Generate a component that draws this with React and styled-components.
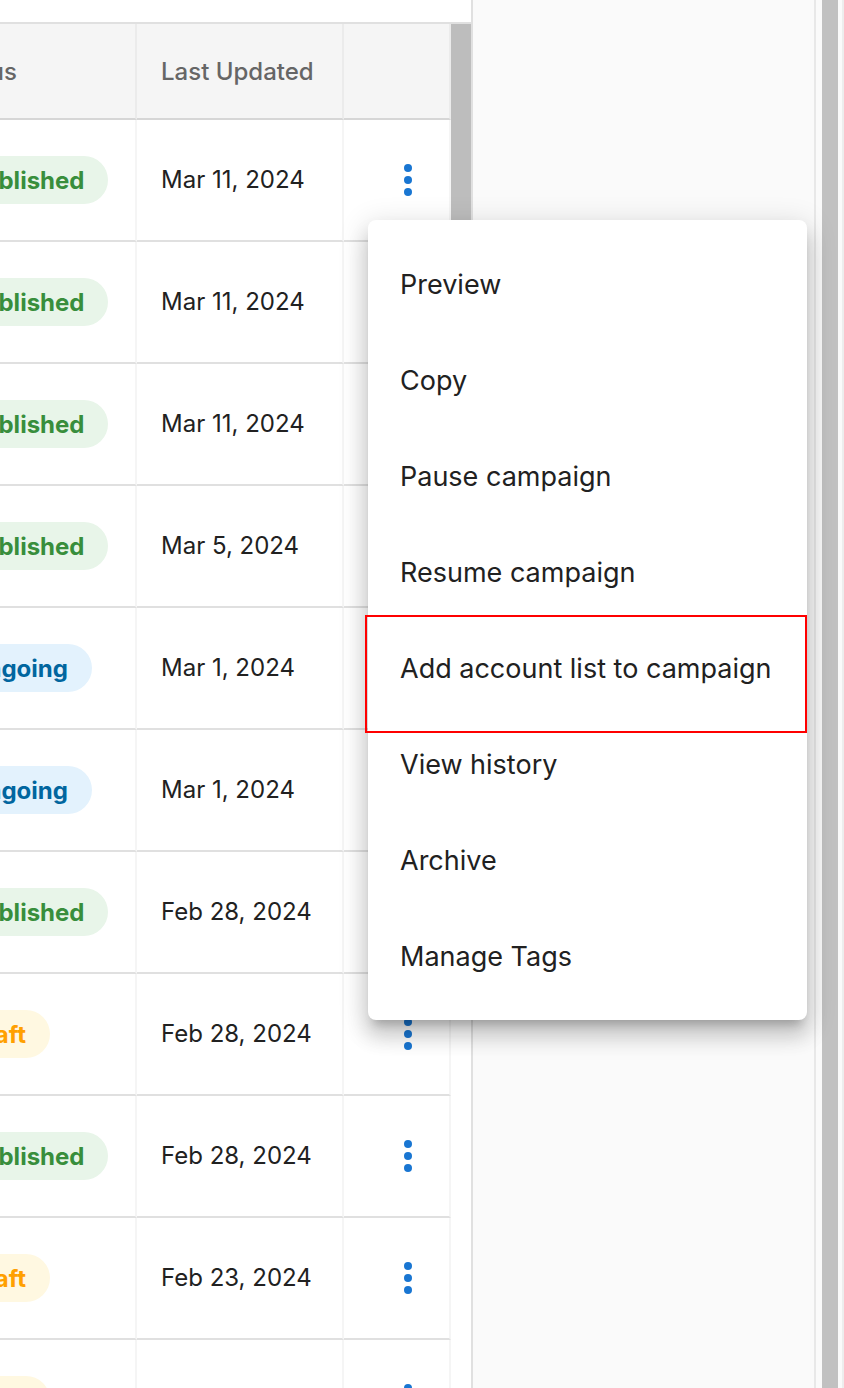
import React from "react";
import styled, { createGlobalStyle, css } from "styled-components";

const GlobalStyle = createGlobalStyle`
  *, *::before, *::after { box-sizing: border-box; }
  body {
    margin: 0;
    background: #fff;
    color: #212121;
    font-family: Inter, "Liberation Sans", sans-serif;
    font-size: 24px;
    line-height: 32px;
  }
  button { font: inherit; color: inherit; }
`;

const Page = styled.div`
  position: relative;
  display: flex;
  height: 100vh;
  overflow: hidden;
  background: #fafafa;
`;

const GridPane = styled.main`
  flex: 1;
  min-width: 0;
  display: flex;
  flex-direction: column;
  padding-top: 22px;
  background: #fff;
  border-right: 2px solid #e0e0e0;
`;

const GridBody = styled.div`
  flex: 1;
  min-height: 0;
  display: flex;
  justify-content: flex-end;
  align-items: flex-start;
  overflow: hidden;
  border-top: 2px solid #e0e0e0;
`;

const Table = styled.table`
  flex: none;
  table-layout: fixed;
  width: 531px;
  border-collapse: separate;
  border-spacing: 0;
`;

const Column = styled.col`
  width: ${(p) => p.$width}px;
`;

const HeadCell = styled.th`
  height: 96px;
  padding: 2px 24px 0;
  text-align: left;
  font-weight: 500;
  color: #666;
  background: #f5f5f5;
  border-right: 2px solid #ebebeb;
  border-bottom: 2px solid #d6d6d6;
`;

const Cell = styled.td`
  height: 122px;
  padding: 0 ${(p) => (p.$actions ? 16 : 24)}px 0 ${(p) => (p.$actions ? 40 : 24)}px;
  white-space: nowrap;
  border-right: 2px solid #f5f5f5;
  border-bottom: 2px solid #e0e0e0;
`;

const tones = {
  Published: css`color: #388e3c; background: #e8f5e9;`,
  Ongoing: css`color: #01669f; background: #e3f2fd;`,
  Draft: css`color: #ffa000; background: #fff8e1;`,
};

const StatusChip = styled.span`
  display: inline-flex;
  align-items: center;
  height: 48px;
  padding: 2px 24px 0;
  border-radius: 24px;
  font-weight: 700;
  vertical-align: middle;
  ${(p) => tones[p.$status]}
`;

const IconButton = styled.button`
  display: flex;
  padding: 0;
  border: 0;
  background: none;
  color: #1976d2;
  cursor: pointer;
`;

const GridScrollTrack = styled.div`
  flex: 0 0 20px;
  align-self: stretch;
`;

const GridScrollThumb = styled.div`
  height: 40%;
  background: #bdbdbd;
`;

const SidePane = styled.aside`
  flex: 0 0 341px;
`;

const PageScrollTrack = styled.div`
  flex: 0 0 30px;
  padding: 0 4px 0 6px;
  border-left: 2px solid #e8e8e8;
  border-right: 2px solid #ededed;
`;

const PageScrollThumb = styled.div`
  height: 100%;
  background: #c1c1c1;
`;

const Menu = styled.div`
  position: absolute;
  top: 220px;
  right: 37px;
  display: flex;
  flex-direction: column;
  min-width: 439px;
  padding: 16px 0;
  border-radius: 8px;
  background: #fff;
  box-shadow:
    0 10px 10px -6px rgba(0, 0, 0, 0.2),
    0 16px 20px 2px rgba(0, 0, 0, 0.14),
    0 6px 28px 4px rgba(0, 0, 0, 0.12);
`;

const MenuItem = styled.button`
  position: relative;
  height: 96px;
  padding: 2px 32px 0;
  border: 0;
  background: none;
  font-size: 27px;
  text-align: left;
  white-space: nowrap;
  cursor: pointer;

  ${(p) =>
    p.$outlined &&
    css`
      &::after {
        content: "";
        position: absolute;
        inset: -5px 0 -17px -3px;
        border: 2px solid #f00;
      }
    `}
`;

const rows = [
  ["Published", "Mar 11, 2024"],
  ["Published", "Mar 11, 2024"],
  ["Published", "Mar 11, 2024"],
  ["Published", "Mar 5, 2024"],
  ["Ongoing", "Mar 1, 2024"],
  ["Ongoing", "Mar 1, 2024"],
  ["Published", "Feb 28, 2024"],
  ["Draft", "Feb 28, 2024"],
  ["Published", "Feb 28, 2024"],
  ["Draft", "Feb 23, 2024"],
  ["Draft", "Feb 23, 2024"],
];

const menuItems = [
  "Preview",
  "Copy",
  "Pause campaign",
  "Resume campaign",
  "Add account list to campaign",
  "View history",
  "Archive",
  "Manage Tags",
];

function MoreIcon() {
  return (
    <svg width="48" height="48" viewBox="0 0 24 24" fill="currentColor" aria-hidden="true">
      <circle cx="12" cy="6" r="2" />
      <circle cx="12" cy="12" r="2" />
      <circle cx="12" cy="18" r="2" />
    </svg>
  );
}

export default function App() {
  return (
    <>
      <GlobalStyle />
      <Page>
        <GridPane>
          <GridBody>
            <Table>
              <colgroup>
                <Column $width={217} />
                <Column $width={207} />
                <Column $width={107} />
              </colgroup>
              <thead>
                <tr>
                  <HeadCell scope="col">Status</HeadCell>
                  <HeadCell scope="col">Last Updated</HeadCell>
                  <HeadCell scope="col" aria-label="Actions" />
                </tr>
              </thead>
              <tbody>
                {rows.map(([status, updated], i) => (
                  <tr key={i}>
                    <Cell>
                      <StatusChip $status={status}>{status}</StatusChip>
                    </Cell>
                    <Cell>{updated}</Cell>
                    <Cell $actions>
                      <IconButton type="button" aria-label="More actions" aria-haspopup="menu">
                        <MoreIcon />
                      </IconButton>
                    </Cell>
                  </tr>
                ))}
              </tbody>
            </Table>
            <GridScrollTrack>
              <GridScrollThumb />
            </GridScrollTrack>
          </GridBody>
        </GridPane>
        <SidePane />
        <PageScrollTrack>
          <PageScrollThumb />
        </PageScrollTrack>
        <Menu role="menu">
          {menuItems.map((label) => (
            <MenuItem
              key={label}
              type="button"
              role="menuitem"
              $outlined={label === "Add account list to campaign"}
            >
              {label}
            </MenuItem>
          ))}
        </Menu>
      </Page>
    </>
  );
}
